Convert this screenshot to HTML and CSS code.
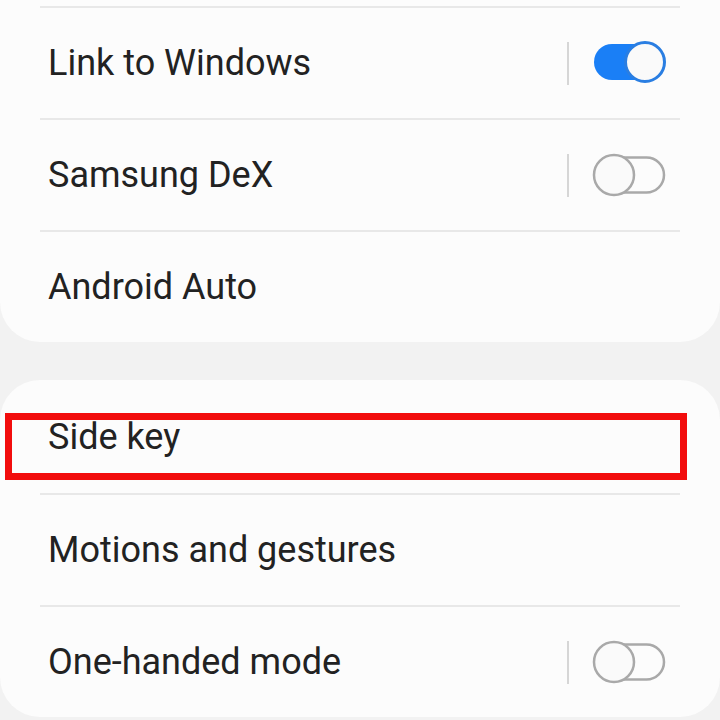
FILE: index.html
```html
<!DOCTYPE html>
<html lang="en">
<head>
<meta charset="utf-8">
<title>Connected devices</title>
<link rel="stylesheet" href="styles.css">
</head>
<body>
<main class="settings">
  <section class="card card--top">
    <div class="row">
      <span class="label">Link to Windows</span>
      <span class="sep"></span>
      <svg class="switch" viewBox="0 0 76 44" width="76" height="44" aria-label="On">
        <rect x="2" y="3" width="60" height="36" rx="18" fill="#1a7ff6"/>
        <circle cx="53" cy="21" r="19.5" fill="#fafafa" stroke="#2a7ee2" stroke-width="3"/>
      </svg>
    </div>
    <div class="row">
      <span class="label">Samsung DeX</span>
      <span class="sep"></span>
      <svg class="switch" viewBox="0 0 76 44" width="76" height="44" aria-label="Off">
        <rect x="5" y="4.5" width="67" height="35" rx="17.5" fill="none" stroke="#a9a9a9" stroke-width="2.5"/>
        <circle cx="22" cy="22" r="20" fill="#fafafa" stroke="#a9a9a9" stroke-width="2.5"/>
      </svg>
    </div>
    <div class="row">
      <span class="label">Android Auto</span>
    </div>
  </section>

  <section class="card">
    <div class="row row--first">
      <span class="label">Side key</span>
      <span class="mark"></span>
    </div>
    <div class="row">
      <span class="label">Motions and gestures</span>
    </div>
    <div class="row">
      <span class="label">One-handed mode</span>
      <span class="sep"></span>
      <svg class="switch" viewBox="0 0 76 44" width="76" height="44" aria-label="Off">
        <rect x="5" y="4.5" width="67" height="35" rx="17.5" fill="none" stroke="#a9a9a9" stroke-width="2.5"/>
        <circle cx="22" cy="22" r="20" fill="#fafafa" stroke="#a9a9a9" stroke-width="2.5"/>
      </svg>
    </div>
  </section>
</main>
</body>
</html>
```

FILE: styles.css
```css
* {
  box-sizing: border-box;
}

html,
body {
  margin: 0;
  padding: 0;
  background: #f2f2f2;
}

body {
  width: 720px;
  height: 720px;
  overflow: hidden;
  font-family: Roboto, "Noto Sans", sans-serif;
  color: #222222;
}

.settings {
  display: flex;
  flex-direction: column;
  gap: 38px;
}

.card {
  background: #fcfcfc;
  border-radius: 40px;
}

.card--top {
  border-radius: 0 0 40px 40px;
  padding-top: 6px;
}

.row {
  position: relative;
  display: flex;
  align-items: center;
  height: 112px;
  margin: 0 40px;
  padding: 0 12px 0 8px;
  border-top: 2px solid #e8e8e8;
}

.row--first {
  border-top: none;
  height: 113px;
}

.label {
  flex: 1;
  font-size: 36px;
  line-height: 1;
}

.sep {
  width: 2px;
  height: 43px;
  background: #d6d6d6;
  margin-right: 23px;
}

.switch {
  display: block;
  flex: none;
}

/* highlight frame drawn over the "Side key" row */
.mark {
  position: absolute;
  left: -35px;
  top: 33px;
  width: 682px;
  height: 67px;
  border: 7px solid #f20d0d;
  pointer-events: none;
}
```
